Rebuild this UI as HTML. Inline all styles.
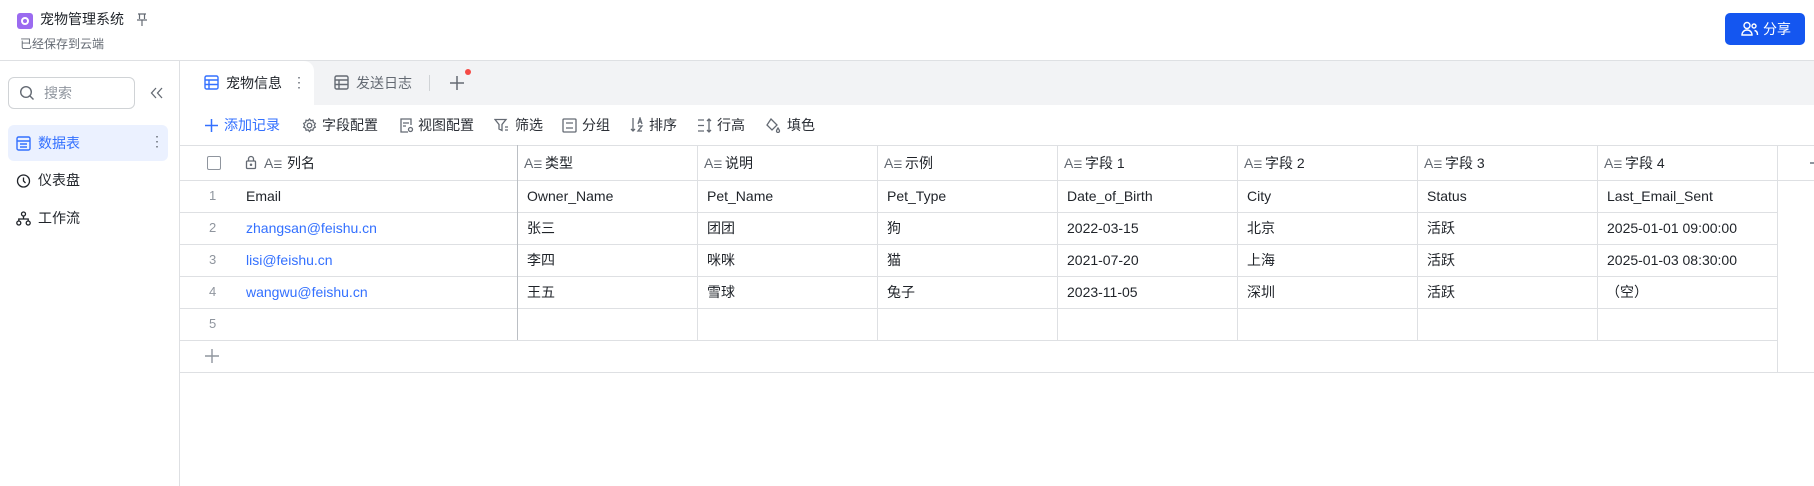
<!DOCTYPE html>
<html><head><meta charset="utf-8"><style>
*{margin:0;padding:0;box-sizing:border-box}
body{width:1814px;height:486px;overflow:hidden;background:#fff;font-family:"Liberation Sans","Noto Sans CJK SC",sans-serif;color:#1f2329;position:relative;font-size:14px}
.a{position:absolute;white-space:nowrap}
.hl{position:absolute;height:1px;background:#dee0e3}
.vl{position:absolute;width:1px;background:#dee0e3}
.g{color:#646a73}
.blue{color:#3370ff}
.cell{position:absolute;white-space:nowrap;line-height:32px;height:32px}
</style></head><body>
<!-- header -->
<div class="a" style="left:17px;top:13px;width:16px;height:16px;border-radius:3px;background:#9b6bf0"></div>
<div class="a" style="left:21px;top:17px;width:8px;height:8px;border-radius:50%;border:2px solid #fff"></div>
<div class="a" style="left:40px;top:10px;font-size:14px;line-height:18px">宠物管理系统</div>
<svg class="a" style="left:136px;top:13px" width="12" height="14" viewBox="0 0 12 14" fill="none" stroke="#646a73" stroke-width="1.2"><path d="M2 1h8M3.5 1v5M8.5 1v5M1 7h10M6 7v6"/></svg>
<div class="a g" style="left:20px;top:36px;font-size:12px;line-height:16px">已经保存到云端</div>
<div class="a" style="left:1725px;top:13px;width:80px;height:32px;border-radius:5px;background:#1456f0;color:#fff;font-size:14px;line-height:32px;padding-left:38px">分享</div>
<svg class="a" style="left:1741px;top:21px" width="18" height="16" viewBox="0 0 18 16" fill="none" stroke="#fff" stroke-width="1.4"><circle cx="6" cy="4.5" r="3"/><path d="M1 14c0-3 2.2-5 5-5s5 2 5 5z"/><circle cx="13" cy="5" r="2"/><path d="M13.5 9.5c2 .3 3 2 3 4.5"/></svg>
<div class="hl" style="left:0;top:60px;width:1814px"></div>
<!-- sidebar -->
<div class="vl" style="left:179px;top:60px;height:426px"></div>
<div class="a" style="left:8px;top:77px;width:127px;height:32px;border:1px solid #d0d3d6;border-radius:6px"></div>
<svg class="a" style="left:19px;top:85px" width="16" height="16" viewBox="0 0 16 16" fill="none" stroke="#646a73" stroke-width="1.4"><circle cx="7" cy="7" r="5.3"/><path d="M11 11l3.5 3.5"/></svg>
<div class="a" style="left:44px;top:84px;color:#8f959e;line-height:18px">搜索</div>
<svg class="a" style="left:150px;top:87px" width="14" height="12" viewBox="0 0 14 12" fill="none" stroke="#646a73" stroke-width="1.3"><path d="M6 1L1.5 6 6 11M12 1L7.5 6 12 11"/></svg>
<div class="a" style="left:8px;top:125px;width:160px;height:36px;border-radius:6px;background:#ebf1ff"></div>
<svg class="a" style="left:16px;top:136px" width="15" height="15" viewBox="0 0 15 15" fill="none" stroke="#3370ff" stroke-width="1.4"><rect x="1" y="1" width="13" height="13" rx="1.5"/><path d="M1 5h13M4 8h7M4 11h7"/></svg>
<div class="a blue" style="left:38px;top:134px;font-size:14px;line-height:18px">数据表</div>
<div class="a g" style="left:150px;top:132px;font-size:14px;line-height:18px">⋮</div>
<svg class="a" style="left:16px;top:173px" width="15" height="15" viewBox="0 0 15 15" fill="none" stroke="#1f2329" stroke-width="1.3"><circle cx="7.5" cy="8" r="6"/><path d="M7.5 4.5v3.5l2 2"/></svg>
<div class="a" style="left:38px;top:171px;line-height:18px">仪表盘</div>
<svg class="a" style="left:16px;top:211px" width="15" height="15" viewBox="0 0 15 15" fill="none" stroke="#1f2329" stroke-width="1.3"><circle cx="7.5" cy="3" r="2"/><circle cx="2.8" cy="12" r="2"/><circle cx="12.2" cy="12" r="2"/><path d="M7.5 5v3M2.8 10V8h9.4v2"/></svg>
<div class="a" style="left:38px;top:209px;line-height:18px">工作流</div>
<!-- tab bar -->
<div class="a" style="left:180px;top:61px;width:1634px;height:44px;background:#f2f3f5"></div>
<div class="a" style="left:180px;top:61px;width:134px;height:44px;background:#fff;border-radius:0 10px 0 0"></div>
<svg class="a" style="left:204px;top:75px" width="15" height="15" viewBox="0 0 15 15" fill="none" stroke="#3370ff" stroke-width="1.4"><rect x="1" y="1" width="13" height="13" rx="1.5"/><path d="M1 5h13M1 9.5h13M5 5v9"/></svg>
<div class="a" style="left:226px;top:74px;line-height:18px">宠物信息</div>
<div class="a g" style="left:292px;top:73px;line-height:18px">⋮</div>
<svg class="a" style="left:334px;top:75px" width="15" height="15" viewBox="0 0 15 15" fill="none" stroke="#646a73" stroke-width="1.4"><rect x="1" y="1" width="13" height="13" rx="1.5"/><path d="M1 5h13M1 9.5h13M5 5v9"/></svg>
<div class="a g" style="left:356px;top:74px;line-height:18px">发送日志</div>
<div class="a" style="left:429px;top:75px;width:1px;height:16px;background:#d0d3d6"></div>
<svg class="a" style="left:449px;top:75px" width="16" height="16" viewBox="0 0 16 16" stroke="#646a73" stroke-width="1.5"><path d="M8 1v14M1 8h14"/></svg>
<div class="a" style="left:465px;top:69px;width:6px;height:6px;border-radius:50%;background:#f54a45"></div>
<!-- toolbar -->
<svg class="a" style="left:205px;top:119px" width="13" height="13" viewBox="0 0 13 13" stroke="#3370ff" stroke-width="1.5"><path d="M6.5 0v13M0 6.5h13"/></svg>
<div class="a blue" style="left:224px;top:116px;line-height:18px">添加记录</div>
<svg class="a" style="left:302px;top:118px" width="15" height="15" viewBox="0 0 15 15" fill="none" stroke="#646a73" stroke-width="1.3"><circle cx="7.5" cy="7.5" r="2.3"/><path d="M7.5 1l1.3 1.7 2.1-.4.5 2.1 1.9 1-1 1.9 1 1.9-1.9 1-.5 2.1-2.1-.4-1.3 1.7-1.3-1.7-2.1.4-.5-2.1-1.9-1 1-1.9-1-1.9 1.9-1 .5-2.1 2.1.4z"/></svg>
<div class="a" style="left:322px;top:116px;line-height:18px;color:#2b2f36">字段配置</div>
<svg class="a" style="left:399px;top:118px" width="15" height="15" viewBox="0 0 15 15" fill="none" stroke="#646a73" stroke-width="1.3"><path d="M9 14H2V1h10v6M4 5h6M4 8h3"/><circle cx="11.5" cy="11.5" r="2"/></svg>
<div class="a" style="left:418px;top:116px;line-height:18px;color:#2b2f36">视图配置</div>
<svg class="a" style="left:494px;top:118px" width="15" height="15" viewBox="0 0 15 15" fill="none" stroke="#646a73" stroke-width="1.3"><path d="M1 1.5h11l-4 5v6l-3-1.5v-4.5zM11 9h3M11 12h3"/></svg>
<div class="a" style="left:515px;top:116px;line-height:18px;color:#2b2f36">筛选</div>
<svg class="a" style="left:562px;top:118px" width="15" height="15" viewBox="0 0 15 15" fill="none" stroke="#646a73" stroke-width="1.3"><rect x="1" y="1" width="13" height="13" rx="1"/><path d="M4 5h7M4 10h7"/></svg>
<div class="a" style="left:582px;top:116px;line-height:18px;color:#2b2f36">分组</div>
<svg class="a" style="left:630px;top:117px" width="15" height="16" viewBox="0 0 15 16" fill="none" stroke="#646a73" stroke-width="1.3"><path d="M3 1v13M1 12l2 2 2-2M8 7l2-6 2 6M8.7 5h2.6M8 9h4l-4 5h4"/></svg>
<div class="a" style="left:649px;top:116px;line-height:18px;color:#2b2f36">排序</div>
<svg class="a" style="left:697px;top:118px" width="16" height="15" viewBox="0 0 16 15" fill="none" stroke="#646a73" stroke-width="1.3"><path d="M1 2h6M1 7.5h6M1 13h6M12 1v13M10 3l2-2 2 2M10 12l2 2 2-2"/></svg>
<div class="a" style="left:717px;top:116px;line-height:18px;color:#2b2f36">行高</div>
<svg class="a" style="left:765px;top:118px" width="16" height="15" viewBox="0 0 16 15" fill="none" stroke="#646a73" stroke-width="1.3"><path d="M6 1l6 6-5 5-5-5z"/><path d="M13 10c1 1.5 1.5 2.3 1.5 3a1.5 1.5 0 0 1-3 0c0-.7.5-1.5 1.5-3z"/></svg>
<div class="a" style="left:787px;top:116px;line-height:18px;color:#2b2f36">填色</div>
<!-- table lines -->
<div class="hl" style="left:180px;top:145px;width:1634px"></div>
<div class="hl" style="left:180px;top:180px;width:1634px"></div>
<div class="hl" style="left:180px;top:212px;width:1597px"></div>
<div class="hl" style="left:180px;top:244px;width:1597px"></div>
<div class="hl" style="left:180px;top:276px;width:1597px"></div>
<div class="hl" style="left:180px;top:308px;width:1597px"></div>
<div class="hl" style="left:180px;top:340px;width:1597px"></div>
<div class="hl" style="left:180px;top:372px;width:1634px"></div>
<div class="vl" style="left:517px;top:145px;height:195px;background:#bbbfc4"></div>
<div class="vl" style="left:697px;top:145px;height:195px"></div>
<div class="vl" style="left:877px;top:145px;height:195px"></div>
<div class="vl" style="left:1057px;top:145px;height:195px"></div>
<div class="vl" style="left:1237px;top:145px;height:195px"></div>
<div class="vl" style="left:1417px;top:145px;height:195px"></div>
<div class="vl" style="left:1597px;top:145px;height:195px"></div>
<div class="vl" style="left:1777px;top:145px;height:227px"></div>
<div class="a" style="left:1810px;top:162px;width:4px;height:1.5px;background:#8f959e"></div>
<!-- header row -->
<div class="a" style="left:207px;top:156px;width:14px;height:14px;border:1.5px solid #8f959e;border-radius:2px"></div>
<svg class="a" style="left:245px;top:155px" width="12" height="15" viewBox="0 0 12 15" fill="none" stroke="#646a73" stroke-width="1.3"><rect x="1.5" y="6" width="9" height="7.5" rx="1"/><path d="M3.5 6V4a2.5 2.5 0 0 1 5 0v2"/><circle cx="6" cy="9.8" r=".6" fill="#646a73"/></svg>
<div class="a g" style="left:264px;top:154px;line-height:18px;font-size:14px">A<span style="font-size:10px">☰</span></div>
<div class="a" style="left:287px;top:154px;line-height:18px">列名</div>
<div class="a g" style="left:524px;top:154px;line-height:18px">A<span style="font-size:10px">☰</span></div><div class="a" style="left:545px;top:154px;line-height:18px">类型</div>
<div class="a g" style="left:704px;top:154px;line-height:18px">A<span style="font-size:10px">☰</span></div><div class="a" style="left:725px;top:154px;line-height:18px">说明</div>
<div class="a g" style="left:884px;top:154px;line-height:18px">A<span style="font-size:10px">☰</span></div><div class="a" style="left:905px;top:154px;line-height:18px">示例</div>
<div class="a g" style="left:1064px;top:154px;line-height:18px">A<span style="font-size:10px">☰</span></div><div class="a" style="left:1085px;top:154px;line-height:18px">字段 1</div>
<div class="a g" style="left:1244px;top:154px;line-height:18px">A<span style="font-size:10px">☰</span></div><div class="a" style="left:1265px;top:154px;line-height:18px">字段 2</div>
<div class="a g" style="left:1424px;top:154px;line-height:18px">A<span style="font-size:10px">☰</span></div><div class="a" style="left:1445px;top:154px;line-height:18px">字段 3</div>
<div class="a g" style="left:1604px;top:154px;line-height:18px">A<span style="font-size:10px">☰</span></div><div class="a" style="left:1625px;top:154px;line-height:18px">字段 4</div>
<!-- rows -->
<div class="cell" style="left:209px;top:180px;color:#8f959e;font-size:13px">1</div>
<div class="cell" style="left:246px;top:180px">Email</div>
<div class="cell" style="left:527px;top:180px">Owner_Name</div>
<div class="cell" style="left:707px;top:180px">Pet_Name</div>
<div class="cell" style="left:887px;top:180px">Pet_Type</div>
<div class="cell" style="left:1067px;top:180px">Date_of_Birth</div>
<div class="cell" style="left:1247px;top:180px">City</div>
<div class="cell" style="left:1427px;top:180px">Status</div>
<div class="cell" style="left:1607px;top:180px">Last_Email_Sent</div>

<div class="cell" style="left:209px;top:212px;color:#8f959e;font-size:13px">2</div>
<div class="cell blue" style="left:246px;top:212px">zhangsan@feishu.cn</div>
<div class="cell" style="left:527px;top:212px">张三</div>
<div class="cell" style="left:707px;top:212px">团团</div>
<div class="cell" style="left:887px;top:212px">狗</div>
<div class="cell" style="left:1067px;top:212px">2022-03-15</div>
<div class="cell" style="left:1247px;top:212px">北京</div>
<div class="cell" style="left:1427px;top:212px">活跃</div>
<div class="cell" style="left:1607px;top:212px">2025-01-01 09:00:00</div>

<div class="cell" style="left:209px;top:244px;color:#8f959e;font-size:13px">3</div>
<div class="cell blue" style="left:246px;top:244px">lisi@feishu.cn</div>
<div class="cell" style="left:527px;top:244px">李四</div>
<div class="cell" style="left:707px;top:244px">咪咪</div>
<div class="cell" style="left:887px;top:244px">猫</div>
<div class="cell" style="left:1067px;top:244px">2021-07-20</div>
<div class="cell" style="left:1247px;top:244px">上海</div>
<div class="cell" style="left:1427px;top:244px">活跃</div>
<div class="cell" style="left:1607px;top:244px">2025-01-03 08:30:00</div>

<div class="cell" style="left:209px;top:276px;color:#8f959e;font-size:13px">4</div>
<div class="cell blue" style="left:246px;top:276px">wangwu@feishu.cn</div>
<div class="cell" style="left:527px;top:276px">王五</div>
<div class="cell" style="left:707px;top:276px">雪球</div>
<div class="cell" style="left:887px;top:276px">兔子</div>
<div class="cell" style="left:1067px;top:276px">2023-11-05</div>
<div class="cell" style="left:1247px;top:276px">深圳</div>
<div class="cell" style="left:1427px;top:276px">活跃</div>
<div class="cell" style="left:1606px;top:276px">（空）</div>

<div class="cell" style="left:209px;top:308px;color:#8f959e;font-size:13px">5</div>
<svg class="a" style="left:205px;top:349px" width="14" height="14" viewBox="0 0 14 14" stroke="#8f959e" stroke-width="1.4"><path d="M7 0v14M0 7h14"/></svg>
</body></html>
